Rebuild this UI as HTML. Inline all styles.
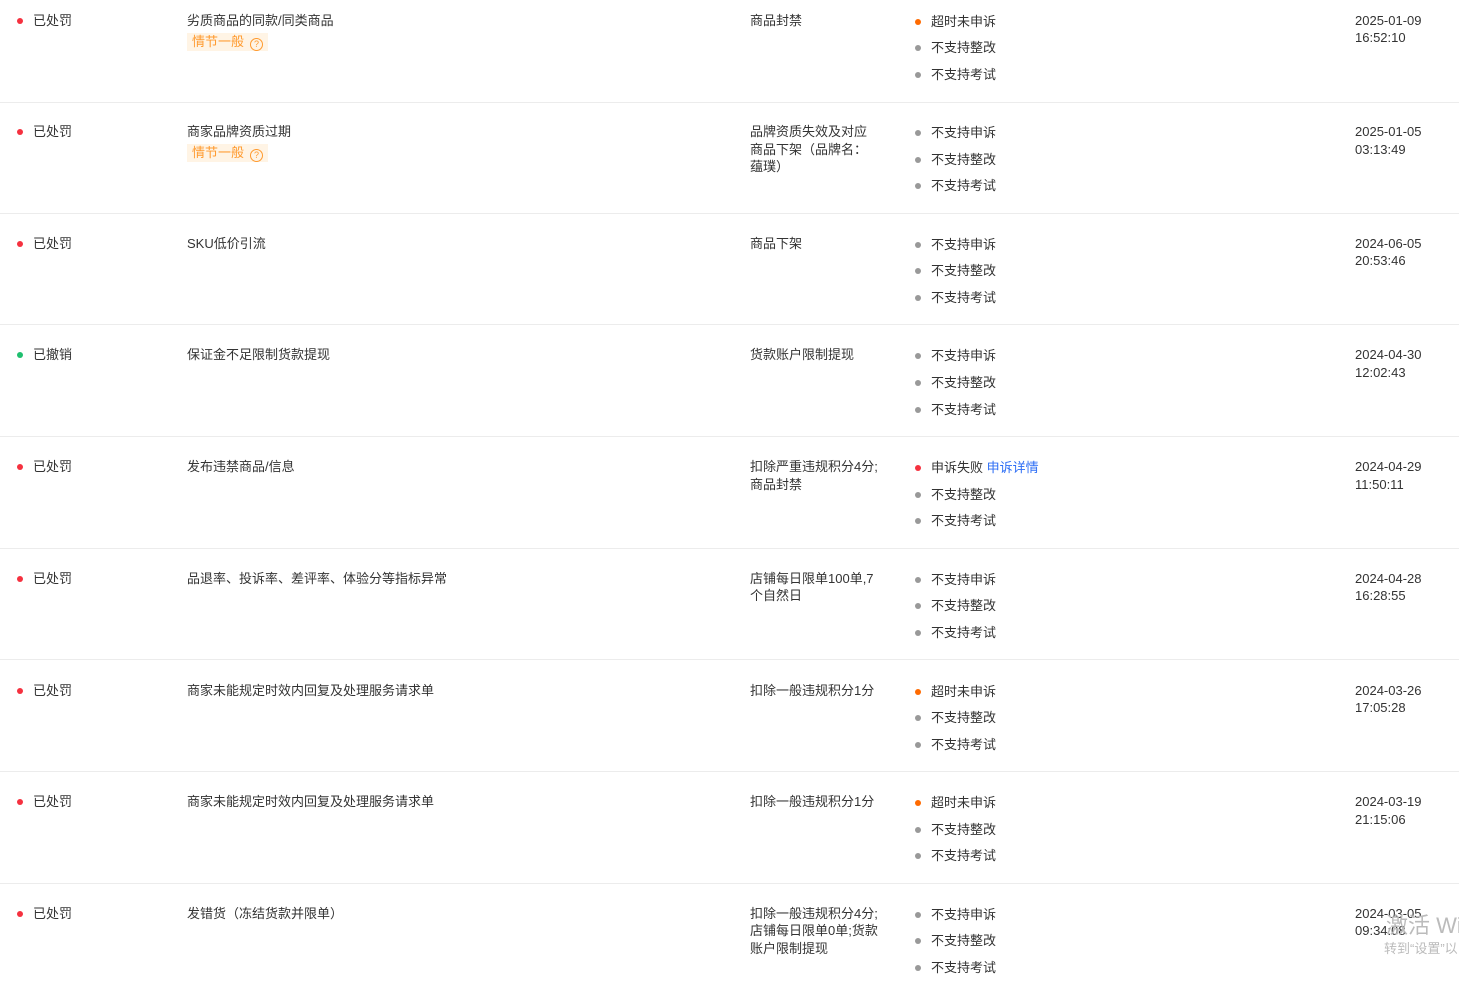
<!DOCTYPE html>
<html><head><meta charset="utf-8"><style>
body{margin:0;width:1459px;height:994px;overflow:hidden;background:#fff;font-family:"Liberation Sans","Noto Sans CJK SC",sans-serif;font-size:13px;color:#333;position:relative}
.row{position:absolute;left:0;width:1459px;height:111px;border-bottom:1px solid #ececec}
.a{position:absolute;line-height:17.5px;white-space:nowrap}
.dot{position:absolute;width:6px;height:6px;border-radius:50%}
.st{left:33px;top:21px}
.t{left:187px;top:21px}
.tag{position:absolute;left:187px;top:42px;height:18px;line-height:18px;padding:0 5px;background:#fff4e5;color:#ff9a2e;font-size:13px}
.tag i{display:inline-block;width:11px;height:11px;border:1px solid #ff9a2e;border-radius:50%;font-style:normal;font-size:9px;line-height:11px;text-align:center;margin-left:6px;vertical-align:-1px}
.act{left:750px;top:21px}
.ap{left:931px;line-height:17px}
.dt{left:1355px;top:21px}
</style></head><body>
<div id="c"></div>
<script>
var R=[
["r","已处罚","劣质商品的同款/同类商品",1,"商品封禁",["o超时未申诉","g不支持整改","g不支持考试"],"2025-01-09","16:52:10"],
["r","已处罚","商家品牌资质过期",1,"品牌资质失效及对应<br>商品下架（品牌名：<br>蕴璞）",["g不支持申诉","g不支持整改","g不支持考试"],"2025-01-05","03:13:49"],
["r","已处罚","SKU低价引流",0,"商品下架",["g不支持申诉","g不支持整改","g不支持考试"],"2024-06-05","20:53:46"],
["n","已撤销","保证金不足限制货款提现",0,"货款账户限制提现",["g不支持申诉","g不支持整改","g不支持考试"],"2024-04-30","12:02:43"],
["r","已处罚","发布违禁商品/信息",0,"扣除严重违规积分4分;<br>商品封禁",["r申诉失败 <span style='color:#2c6df5'>申诉详情</span>","g不支持整改","g不支持考试"],"2024-04-29","11:50:11"],
["r","已处罚","品退率、投诉率、差评率、体验分等指标异常",0,"店铺每日限单100单,7<br>个自然日",["g不支持申诉","g不支持整改","g不支持考试"],"2024-04-28","16:28:55"],
["r","已处罚","商家未能规定时效内回复及处理服务请求单",0,"扣除一般违规积分1分",["o超时未申诉","g不支持整改","g不支持考试"],"2024-03-26","17:05:28"],
["r","已处罚","商家未能规定时效内回复及处理服务请求单",0,"扣除一般违规积分1分",["o超时未申诉","g不支持整改","g不支持考试"],"2024-03-19","21:15:06"],
["r","已处罚","发错货（冻结货款并限单）",0,"扣除一般违规积分4分;<br>店铺每日限单0单;货款<br>账户限制提现",["g不支持申诉","g不支持整改","g不支持考试"],"2024-03-05","09:34:08"]];
var C={r:"#f5313f",n:"#1fbf6f",o:"#ff6a00",g:"#999"};
var h="";
R.forEach(function(d,i){
 var top=i==0?-9.5:102+111.7*(i-1);
 h+='<div class="row" style="top:'+top+'px;height:'+(i==0?111.5:110.7)+'px'+(i==8?';border-bottom:none':'')+'">';
 h+='<div class="dot" style="left:17px;top:27px;background:'+C[d[0]]+'"></div>';
 h+='<div class="a st">'+d[1]+'</div><div class="a t">'+d[2]+'</div>';
 if(d[3])h+='<div class="tag">情节一般<i>?</i></div>';
 h+='<div class="a act">'+d[4]+'</div>';
 d[5].forEach(function(s,j){var y=22+26.6*j;h+='<div class="dot" style="left:915px;top:'+(y+6)+'px;background:'+C[s[0]]+'"></div><div class="a ap" style="top:'+y+'px">'+s.slice(1)+'</div>';});
 h+='<div class="a dt">'+d[6]+'<br>'+d[7]+'</div></div>';
});
document.getElementById("c").innerHTML=h;
</script>
<div style="position:absolute;left:1386px;top:908px;color:#bbb;font-size:22px;white-space:nowrap">激活 Wir</div>
<div style="position:absolute;left:1384px;top:938px;color:#bbb;font-size:13px;white-space:nowrap">转到“设置”以</div>
</body></html>
